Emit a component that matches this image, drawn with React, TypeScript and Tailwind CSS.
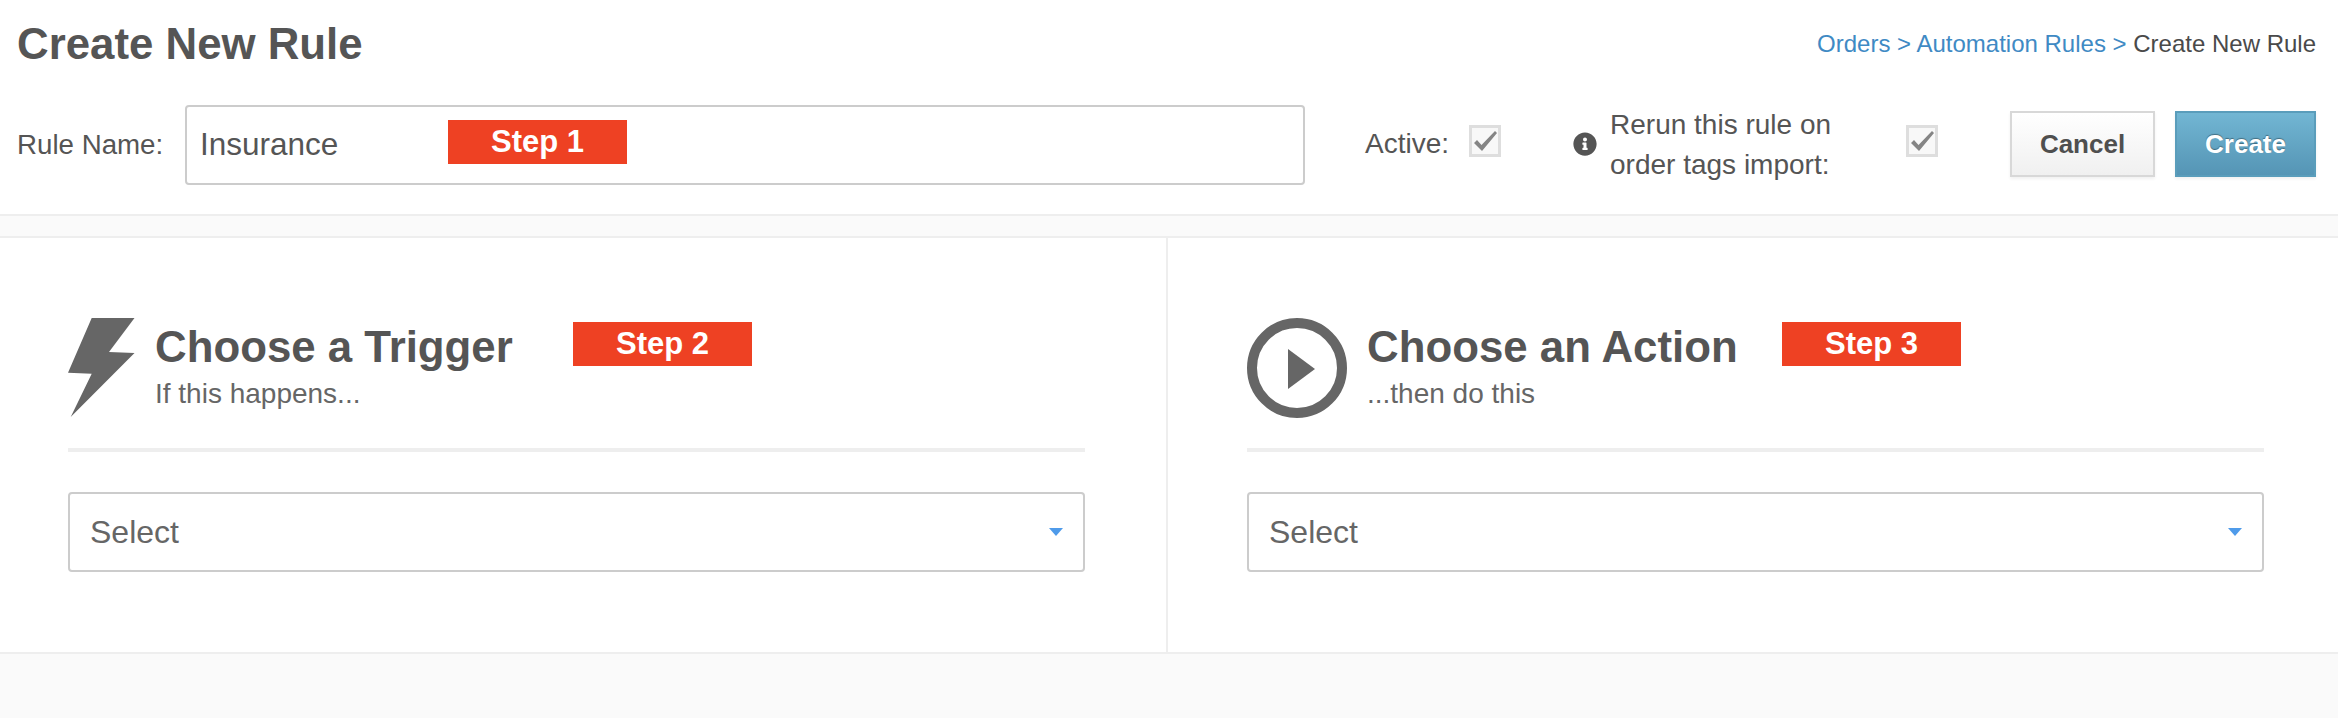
import { FaInfoCircle } from "react-icons/fa";

const StepBadge = ({ label, className }: { label: string; className: string }) => (
  <div className={`flex h-[44px] w-[179px] items-center justify-center bg-[#ee4123] pt-[1px] text-[31px] font-bold text-white ${className}`}>
    {label}
  </div>
);

const CheckBox = ({ className }: { className: string }) => (
  <div className={`mb-[8px] flex h-[32px] w-[32px] shrink-0 items-center justify-center border-[3px] border-[#dedede] bg-[#f8f8f8] ${className}`}>
    <svg viewBox="0 0 32 32" className="h-[32px] w-[32px] shrink-0">
      <path d="M5 18 L8 15 L12.5 20 L26 6 L28 8 L13 26 Z" fill="#858585" />
    </svg>
  </div>
);

const SelectBox = () => (
  <div className="flex h-[80px] items-center justify-between rounded-[4px] border-2 border-[#cccccc] bg-white pl-[20px] pr-[20px] text-[32px] text-[#666666]">
    <span>Select</span>
    <span className="h-0 w-0 border-x-[7px] border-t-[8px] border-x-transparent border-t-[#4f9bea]" />
  </div>
);

const Bolt = () => (
  <svg viewBox="0 0 67 100" className="h-[100px] w-[67px] shrink-0">
    <path d="M23.7 0 H66.5 L41 34 L66.5 35 L2.7 99 L23.7 55.7 L0 54.7 Z" fill="#666666" />
  </svg>
);

const PlayCircle = () => (
  <svg viewBox="0 0 100 100" className="h-[100px] w-[100px] shrink-0">
    <circle cx="50" cy="50" r="45" fill="none" stroke="#666666" strokeWidth="10" />
    <path d="M41 31 L68 51 L41 71 Z" fill="#666666" />
  </svg>
);

export default function App() {
  return (
    <div className="min-h-[718px] bg-[#fafafa] font-['Liberation_Sans',Arial,sans-serif] text-[#555555]">
      {/* header */}
      <div className="h-[214px] bg-white pl-[17px] pr-[22px]">
        <div className="flex h-[88px] items-center justify-between">
          <h1 className="text-[43.8px] font-bold leading-none">Create New Rule</h1>
          <div className="text-[24px]">
            <span className="text-[#3f8ac4]">Orders &gt; Automation Rules &gt; </span>
            <span className="text-[#4a4a4a]">Create New Rule</span>
          </div>
        </div>
        <div className="mt-[17px] flex h-[80px] items-center">
          <label className="w-[168px] shrink-0 text-[27.7px]">Rule Name:</label>
          <div className="relative flex h-[80px] w-[1120px] shrink-0 items-center rounded-[4px] border-2 border-[#cccccc] bg-white pl-[13px] text-[31.5px]">
            Insurance
            <StepBadge label="Step 1" className="absolute left-[261px] top-[13px]" />
          </div>
          <span className="mb-[2px] ml-[60px] text-[28px]">Active:</span>
          <CheckBox className="ml-[20px]" />
          <FaInfoCircle className="mb-[2px] ml-[72px] shrink-0 text-[#555555]" size={24} />
          <div className="ml-[13px] w-[296px] text-[28px] leading-[40px]">
            Rerun this rule on
            <br />
            order tags import:
          </div>
          <CheckBox className="" />
          <button className="mb-[2px] ml-[72px] h-[66px] w-[145px] border-2 border-[#d8d8d8] bg-gradient-to-b from-white to-[#f0f0f0] text-[26px] font-bold text-[#4f4f4f] shadow-[0_2px_3px_rgba(0,0,0,0.06)]">
            Cancel
          </button>
          <button className="mb-[2px] ml-[20px] h-[66px] w-[141px] border-2 border-[#5a9dbb] bg-gradient-to-b from-[#72b6d3] to-[#5595b5] text-[26px] font-bold text-white shadow-[0_2px_3px_rgba(0,0,0,0.06)] [text-shadow:0_-1px_1px_rgba(0,0,0,0.35)]">
            Create
          </button>
        </div>
      </div>

      <div className="h-[22px] border-t-2 border-[#eeeeee]" />

      {/* trigger + action */}
      <div className="grid grid-cols-[1168px_1fr] border-y-2 border-[#eeeeee] bg-white">
        <div className="border-r-2 border-[#eeeeee] pb-[80px] pl-[68px] pr-[81px] pt-[80px]">
          <div className="flex">
            <Bolt />
            <div className="ml-[20px] w-[418px] pt-[4px]">
              <div className="text-[43.8px] font-bold leading-[50px]">Choose a Trigger</div>
              <div className="mt-[5px] text-[28px] leading-[34px] text-[#666666]">If this happens...</div>
            </div>
            <StepBadge label="Step 2" className="mt-[4px]" />
          </div>
          <div className="mb-[40px] mt-[30px] h-[4px] bg-[#eeeeee]" />
          <SelectBox />
        </div>
        <div className="pb-[80px] pl-[79px] pr-[74px] pt-[80px]">
          <div className="flex">
            <PlayCircle />
            <div className="ml-[20px] w-[415px] pt-[4px]">
              <div className="text-[43.8px] font-bold leading-[50px]">Choose an Action</div>
              <div className="mt-[5px] text-[28px] leading-[34px] text-[#666666]">...then do this</div>
            </div>
            <StepBadge label="Step 3" className="mt-[4px]" />
          </div>
          <div className="mb-[40px] mt-[30px] h-[4px] bg-[#eeeeee]" />
          <SelectBox />
        </div>
      </div>
    </div>
  );
}
